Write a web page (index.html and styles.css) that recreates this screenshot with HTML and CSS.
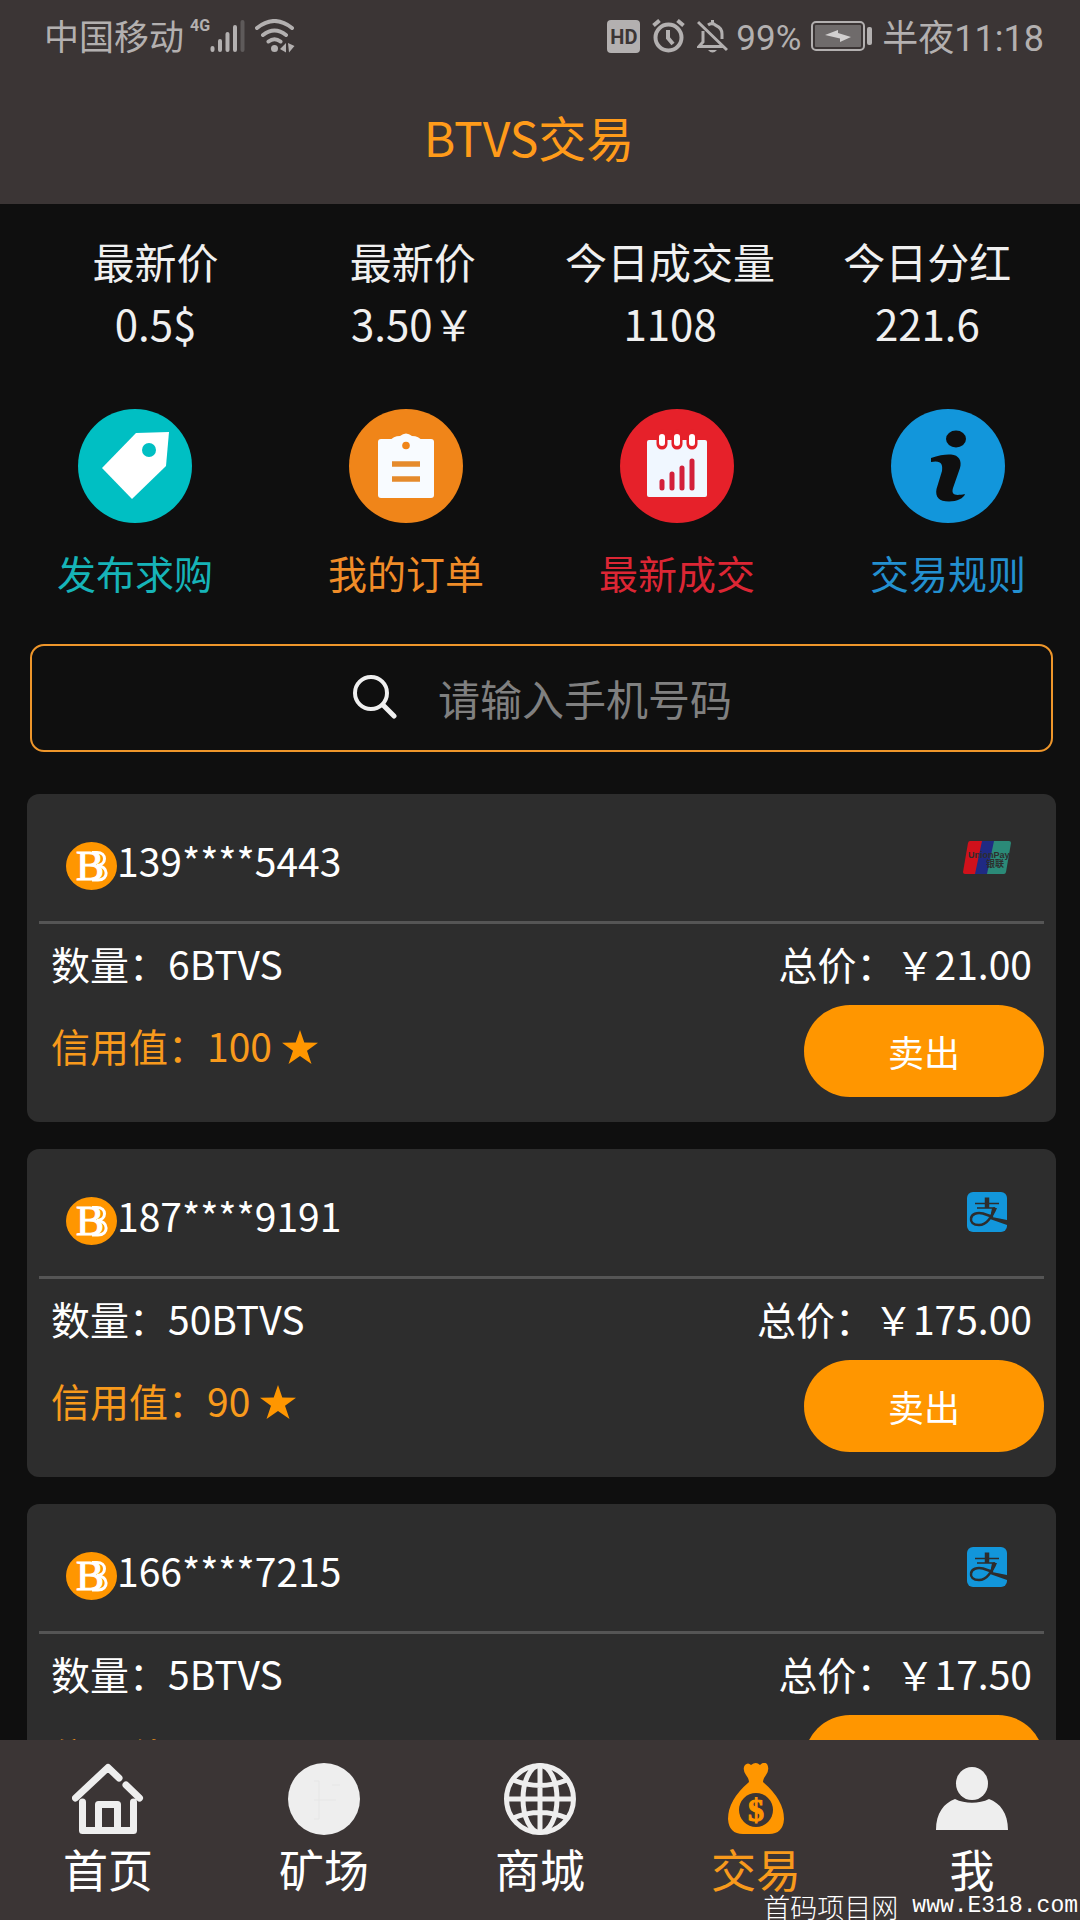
FILE: index.html
```html
<!DOCTYPE html>
<html lang="zh-CN">
<head>
<meta charset="utf-8">
<meta name="viewport" content="width=device-width, initial-scale=1">
<title>BTVS交易</title>
<link rel="stylesheet" href="styles.css">
</head>
<body>
<header class="header">
  <div class="status">
    <div class="status-side">
      <span class="status-text">中国移动</span>
      <span class="network">4G</span>
      <svg class="signal" width="35" height="34" viewBox="0 0 35 34" aria-hidden="true">
        <g stroke="#b3b0b0" stroke-width="4" stroke-linecap="round"><path d="M2.500 29V31M10 22V31M17.500 15V31M25 8V31"/><path d="M32.500 3V31" stroke="#5e5a5a"/></g>
      </svg>
      <svg class="wifi" width="40" height="34" viewBox="0 0 40 34" aria-hidden="true">
        <g fill="none" stroke="#b3b0b0" stroke-width="4" stroke-linecap="round"><path d="M2 9Q19.500-5 37 9M8 16Q19.500 7 31 16M13.500 22.500Q19.500 18 25.500 22.500"/></g>
        <circle cx="19.500" cy="29.500" r="3.500" fill="#b3b0b0"/>
        <path d="M25 30L31 24V33.500ZM33 24L39.500 27 34 33.500Z" fill="#b3b0b0"/>
      </svg>
    </div>
    <div class="status-side">
      <span class="hd">HD</span>
      <svg class="alarm" width="33" height="34" viewBox="0 0 33 34" aria-hidden="true">
        <g fill="none" stroke="#b3b0b0" stroke-width="4"><circle cx="16.500" cy="18.500" r="13"/><path d="M16 11V19L21 25M1.500 6.500L7.500 1.500M25.500 1.500L31.500 6.500"/></g>
      </svg>
      <svg class="bell" width="31" height="34" viewBox="0 0 31 34" aria-hidden="true">
        <g fill="none" stroke="#b3b0b0" stroke-width="3"><path d="M6 12V23L2 27.500H26M11 6Q15 3 19 6.500 25 9 25 15V20M15.500 1V5M1 3L30 31"/></g>
        <path d="M11 31H20Q15.500 36 11 31Z" fill="#b3b0b0"/>
      </svg>
      <span class="status-text percent">99%</span>
      <svg class="battery" width="61" height="30" viewBox="0 0 61 30" aria-hidden="true">
        <rect x="1" y="1" width="52" height="28" rx="4" fill="none" stroke="#b3b0b0" stroke-width="2"/>
        <rect x="4" y="4" width="46" height="22" rx="1" fill="#6f6b6b"/>
        <path d="M14 14L27 9V12L40 16 29 21V17.500Z" fill="#d2d0d0"/>
        <rect x="56" y="6" width="5" height="18" rx="2" fill="#b3b0b0"/>
      </svg>
      <time class="status-text clock">半夜11:18</time>
    </div>
  </div>
  <h1 class="title">BTVS交易</h1>
</header>

<main class="content">
  <dl class="stats">
    <div><dt>最新价</dt><dd>0.5$</dd></div>
    <div><dt>最新价</dt><dd>3.50￥</dd></div>
    <div><dt>今日成交量</dt><dd>1108</dd></div>
    <div><dt>今日分红</dt><dd>221.6</dd></div>
  </dl>

  <div class="actions">
    <a class="action teal" href="#publish">
      <svg width="114" height="114" viewBox="0 0 114 114" aria-hidden="true"><circle cx="57" cy="57" r="57" fill="#00bfc3"/><path d="M91 23L58 24 24 59 54 90 88 57Z" fill="#fff"/><circle cx="71" cy="41" r="7" fill="#00bfc3"/></svg>
      发布求购
    </a>
    <a class="action orange" href="#orders">
      <svg width="114" height="114" viewBox="0 0 114 114" aria-hidden="true"><circle cx="57" cy="57" r="57" fill="#f08519"/><rect x="29" y="30" width="56" height="59" rx="3" fill="#f8fbff"/><path d="M41 32Q44 27 51 27 57 22 63 27 70 27 73 32Z" fill="#f8fbff"/><circle cx="57" cy="36.500" r="3.800" fill="#f08519"/><path d="M43 55H71M43 70H71" stroke="#e58a2c" stroke-width="5.500"/></svg>
      我的订单
    </a>
    <a class="action red" href="#deals">
      <svg width="114" height="114" viewBox="0 0 114 114" aria-hidden="true"><circle cx="57" cy="57" r="57" fill="#e6212a"/><rect x="27" y="31" width="60" height="57" rx="2" fill="#f0f7ff"/><path d="M42 26V35M57 26V35M72 26V35" stroke="#e6212a" stroke-width="11" stroke-linecap="round"/><path d="M42 28V34M57 28V34M72 28V34" stroke="#fff" stroke-width="6" stroke-linecap="round"/><path d="M42 72.500V79M52 65V79M62 59V79M72 52V79" stroke="#d3203a" stroke-width="5" stroke-linecap="round"/></svg>
      最新成交
    </a>
    <a class="action blue" href="#rules">
      <svg width="114" height="114" viewBox="0 0 114 114" aria-hidden="true"><circle cx="57" cy="57" r="57" fill="#1296db"/><ellipse cx="65" cy="30" rx="10" ry="8.500" fill="#0f0f0f"/><path d="M40 49C48 46 56 45 60 45.500 68 46 71 52 69 59L62 79C60 86 64 87 74 85 73 89 66 92.500 58 92.500 48 92.500 44 88 45.500 80L51 62C52 55 50 51 40 53Z" fill="#0f0f0f"/></svg>
      交易规则
    </a>
  </div>

  <form class="search" role="search">
    <svg width="44" height="44" viewBox="0 0 44 44" aria-hidden="true"><circle cx="18" cy="18" r="16" fill="none" stroke="#f0f0f0" stroke-width="4"/><path d="M30 30L41 41" stroke="#f0f0f0" stroke-width="5" stroke-linecap="round"/></svg>
    <input type="tel" placeholder="请输入手机号码" aria-label="手机号码">
  </form>

  <section class="orders">
    <article class="order">
      <header class="order-head">
        <svg class="coin" viewBox="0 0 51 48" aria-hidden="true"><ellipse cx="25.500" cy="24" rx="25.500" ry="24" fill="#ff9600"/><text x="10" y="38">B</text><path d="M26 10.500H31C41 10.500 41 23 31 23.500 43 24 43 38 32 38H26"/></svg>
        <span class="phone">139****5443</span>
        <svg class="pay pay-wide" viewBox="0 0 48 33" role="img" aria-label="银联">
          <path d="M7 0H20L14 33H2Q0 33 0 31L5 2Q5.500 0 7 0Z" fill="#d0111b"/>
          <path d="M19 0H32L26 33H12Z" fill="#1f2a83"/>
          <path d="M31 0H46Q48 0 48 2L43 31Q42.500 33 41 33H24Z" fill="#2b8a78"/>
          <text class="pay-latin" x="5" y="17">UnionPay</text>
          <text class="pay-cjk" x="23" y="26">银联</text>
        </svg>
      </header>
      <div class="order-row"><span>数量：6BTVS</span><span>总价：￥21.00</span></div>
      <div class="order-foot"><span class="credit">信用值：100<svg class="star" viewBox="0 0 36 34" aria-hidden="true"><path d="M18 0L22.300 12.500 36 12.700 25 20.700 29.500 34 18 26 6.500 34 11 20.700 0 12.700 13.700 12.500Z"/></svg></span><button class="sell" type="button">卖出</button></div>
    </article>
    <article class="order">
      <header class="order-head">
        <svg class="coin" viewBox="0 0 51 48" aria-hidden="true"><ellipse cx="25.500" cy="24" rx="25.500" ry="24" fill="#ff9600"/><text x="10" y="38">B</text><path d="M26 10.500H31C41 10.500 41 23 31 23.500 43 24 43 38 32 38H26"/></svg>
        <span class="phone">187****9191</span>
        <svg class="pay" viewBox="0 0 40 40" role="img" aria-label="支付宝">
          <rect width="40" height="40" rx="6" fill="#1296db"/>
          <g fill="none" stroke="#2d2d2d"><path d="M20 5.500V16" stroke-width="4.500"/><path d="M8 11.500H32M10 16H28" stroke-width="1.500"/><path d="M27.500 15.500C25.500 24 20 33 12 33 6 33 3.500 30 4 26.500 4.500 22 10 20 16 21.500L26 25" stroke-width="2.500"/></g>
          <path d="M25 16H30C28 21 26 24 25 25L40 28V33L23 27Z" fill="#2d2d2d"/>
        </svg>
      </header>
      <div class="order-row"><span>数量：50BTVS</span><span>总价：￥175.00</span></div>
      <div class="order-foot"><span class="credit">信用值：90<svg class="star" viewBox="0 0 36 34" aria-hidden="true"><path d="M18 0L22.300 12.500 36 12.700 25 20.700 29.500 34 18 26 6.500 34 11 20.700 0 12.700 13.700 12.500Z"/></svg></span><button class="sell" type="button">卖出</button></div>
    </article>
    <article class="order">
      <header class="order-head">
        <svg class="coin" viewBox="0 0 51 48" aria-hidden="true"><ellipse cx="25.500" cy="24" rx="25.500" ry="24" fill="#ff9600"/><text x="10" y="38">B</text><path d="M26 10.500H31C41 10.500 41 23 31 23.500 43 24 43 38 32 38H26"/></svg>
        <span class="phone">166****7215</span>
        <svg class="pay" viewBox="0 0 40 40" role="img" aria-label="支付宝">
          <rect width="40" height="40" rx="6" fill="#1296db"/>
          <g fill="none" stroke="#2d2d2d"><path d="M20 5.500V16" stroke-width="4.500"/><path d="M8 11.500H32M10 16H28" stroke-width="1.500"/><path d="M27.500 15.500C25.500 24 20 33 12 33 6 33 3.500 30 4 26.500 4.500 22 10 20 16 21.500L26 25" stroke-width="2.500"/></g>
          <path d="M25 16H30C28 21 26 24 25 25L40 28V33L23 27Z" fill="#2d2d2d"/>
        </svg>
      </header>
      <div class="order-row"><span>数量：5BTVS</span><span>总价：￥17.50</span></div>
      <div class="order-foot"><span class="credit">信用值：100<svg class="star" viewBox="0 0 36 34" aria-hidden="true"><path d="M18 0L22.300 12.500 36 12.700 25 20.700 29.500 34 18 26 6.500 34 11 20.700 0 12.700 13.700 12.500Z"/></svg></span><button class="sell" type="button">卖出</button></div>
    </article>
  </section>
</main>

<nav class="tabs">
  <a class="tab" href="#home">
    <svg width="72" height="72" viewBox="0 0 72 72" fill="none" stroke="#eee" stroke-width="7" stroke-linecap="round" aria-hidden="true"><path d="M3.500 35L36 4.500 47 15M54 22L67.500 35M10.500 39V67.500H61.500V39" stroke-linejoin="round"/><path d="M26.500 66V41.500H45.500V66" stroke-linejoin="round"/></svg>
    首页
  </a>
  <a class="tab" href="#mine">
    <svg width="72" height="72" viewBox="0 0 72 72" aria-hidden="true"><circle cx="36" cy="36" r="36" fill="#eee"/><path d="M26 18H31V56H26M26 37H48M44 22H52" fill="none" stroke="#e6e6e6" stroke-width="1"/></svg>
    矿场
  </a>
  <a class="tab" href="#mall">
    <svg width="72" height="72" viewBox="0 0 72 72" fill="none" stroke="#eee" stroke-width="5" aria-hidden="true"><circle cx="36" cy="36" r="33.500"/><ellipse cx="36" cy="36" rx="17" ry="33.500"/><path d="M36 2V70M2 36H70M9 17Q36 28 63 17M9 55Q36 44 63 55"/></svg>
    商城
  </a>
  <a class="tab active" href="#trade" aria-current="page">
    <svg width="72" height="72" viewBox="0 0 72 72" aria-hidden="true"><path d="M29 19Q29 16 26 12 22 6 25 2 28-1 31 2 36-2 40 2 44-2 47 1 50 6 46 12 43 16 43 19 64 37 64 56 63 71 49 71H23Q9 71 8 56 8 37 29 19Z" fill="#ff9600"/><circle cx="36" cy="47" r="17" fill="#3b3535"/><text class="bag-sign" x="36" y="58" text-anchor="middle">$</text></svg>
    交易
  </a>
  <a class="tab" href="#me">
    <svg width="72" height="72" viewBox="0 0 72 72" fill="#eee" aria-hidden="true"><ellipse cx="36" cy="20.500" rx="16" ry="16.500"/><path d="M0 67C0 50 8 40 19 36 29 41 43 41 53 36 64 40 72 50 72 67Z"/></svg>
    我
  </a>
  <p class="watermark"><span>首码项目网</span><span class="site">www.E318.com</span></p>
</nav>
</body>
</html>
```

FILE: styles.css
```css
* {
  box-sizing: border-box;
}

body {
  display: flex;
  flex-direction: column;
  height: 100vh;
  margin: 0;
  background: #0f0f0f;
  color: #fff;
  font-family: "Noto Sans CJK SC", sans-serif;
}

a {
  color: inherit;
  text-decoration: none;
}

/* Header */
.header {
  flex: none;
  height: 204px;
  background: #3b3535;
}

.status {
  display: flex;
  justify-content: space-between;
  height: 72px;
  padding: 0 36px 0 44px;
  color: #b3b0b0;
  font-family: Roboto, "Noto Sans CJK SC", sans-serif;
  font-size: 35px;
  line-height: 66px;
}

.status-side {
  display: flex;
  align-items: center;
}

.status-text {
  padding-top: 6px;
}

.network {
  align-self: flex-start;
  margin-left: 6px;
  padding-top: 18px;
  font-size: 16px;
  font-weight: 700;
  line-height: 16px;
}

.wifi {
  margin-left: 10px;
}

.hd {
  width: 33px;
  height: 33px;
  border-radius: 4px;
  background: #b3b0b0;
  color: #3b3535;
  font-size: 20px;
  font-weight: 700;
  line-height: 34px;
  text-align: center;
}

.alarm,
.bell {
  margin-left: 12px;
}

.percent {
  margin-left: 8px;
}

.battery {
  margin-left: 10px;
}

.clock {
  margin-left: 10px;
  font-size: 36px;
}

.title {
  margin: 0;
  padding-right: 22px;
  color: #ff9b1a;
  font-size: 48px;
  font-weight: 400;
  line-height: 128px;
  text-align: center;
}

/* Scrolling content */
.content {
  flex: 1;
  min-height: 0;
  overflow-y: auto;
  scrollbar-width: none;
}

.stats {
  display: grid;
  grid-template-columns: repeat(4, 1fr);
  margin: 0;
  padding: 26px 24px 0 27px;
  color: #f0f0f0;
  font-size: 42px;
  line-height: 62px;
  text-align: center;
  white-space: nowrap;
}

.stats dd {
  margin: 0;
}

.actions {
  display: flex;
  justify-content: space-between;
  padding: 55px 54px 0 57px;
  font-size: 39px;
  line-height: 60px;
}

.action {
  display: flex;
  flex-direction: column;
  align-items: center;
  gap: 19px;
}

.teal {
  color: #16b4b8;
}

.orange {
  color: #f08c28;
}

.red {
  color: #dc2634;
}

.blue {
  color: #2390d0;
}

.search {
  display: flex;
  align-items: center;
  justify-content: center;
  gap: 41px;
  height: 108px;
  margin: 42px 27px 42px 30px;
  padding: 0 0 2px 4px;
  border: 2px solid #ee962b;
  border-radius: 14px;
}

.search input {
  width: 296px;
  height: 60px;
  padding: 0;
  border: 0;
  outline: 0;
  background: transparent;
  color: #fff;
  font: inherit;
  font-size: 42px;
}

.search input::placeholder {
  color: #808080;
}

/* Order cards */
.orders {
  display: grid;
  gap: 27px;
  padding: 0 24px 27px 27px;
  font-size: 39px;
}

.order {
  padding: 0 12px 25px;
  border-radius: 12px;
  background: #2d2d2d;
}

.order-head {
  display: flex;
  align-items: center;
  height: 130px;
  padding: 6px 33px 0 27px;
  border-bottom: 3px solid #555;
}

.coin {
  flex: none;
  width: 51px;
  height: 48px;
  margin-top: 10px;
  fill: none;
  stroke: #fff;
  stroke-width: 3px;
  font-family: "Liberation Serif", serif;
  font-size: 42px;
}

.coin ellipse {
  stroke: none;
}

.coin text {
  fill: #fff;
  stroke-width: 1px;
}

.phone {
  flex: 1;
  padding-bottom: 2px;
}

.pay {
  width: 40px;
  height: 40px;
  margin: 0 4px 8px 0;
}

.pay-wide {
  width: 48px;
  height: 33px;
  margin: 0 0 6px;
  fill: #2d2d2d;
  font-weight: 700;
}

.pay-latin {
  font-family: "Liberation Sans", sans-serif;
  font-size: 9px;
}

.pay-cjk {
  font-size: 9px;
}

.order-row {
  display: flex;
  justify-content: space-between;
  padding: 0 12px 2px;
  line-height: 79px;
}

.order-foot {
  display: flex;
  justify-content: space-between;
  padding-left: 12px;
}

.credit {
  color: #f89a1c;
  line-height: 80px;
}

.star {
  width: 36px;
  height: 34px;
  margin-left: 10px;
  fill: #ff9600;
  vertical-align: -2px;
}

.sell {
  width: 240px;
  height: 92px;
  padding: 0;
  border: 0;
  border-radius: 46px;
  background: #ff9600;
  color: #fff;
  font: inherit;
  font-size: 36px;
}

/* Bottom tab bar */
.tabs {
  position: relative;
  flex: none;
  display: grid;
  grid-template-columns: repeat(5, 1fr);
  height: 180px;
  padding-top: 23px;
  background: #3b3535;
  font-size: 45px;
  line-height: 68px;
}

.tab {
  display: flex;
  flex-direction: column;
  align-items: center;
}

.active {
  color: #f89a1c;
}

.bag-sign {
  fill: #ff9600;
  stroke: #ff9600;
  font-family: "Liberation Serif", serif;
  font-size: 32px;
  font-weight: 700;
}

.watermark {
  position: absolute;
  right: 2px;
  bottom: 0;
  display: flex;
  gap: 14px;
  margin: 0;
  font-size: 27px;
  font-weight: 300;
  line-height: 27px;
}

.site {
  font-family: "Liberation Mono", monospace;
  font-size: 23px;
}
```
